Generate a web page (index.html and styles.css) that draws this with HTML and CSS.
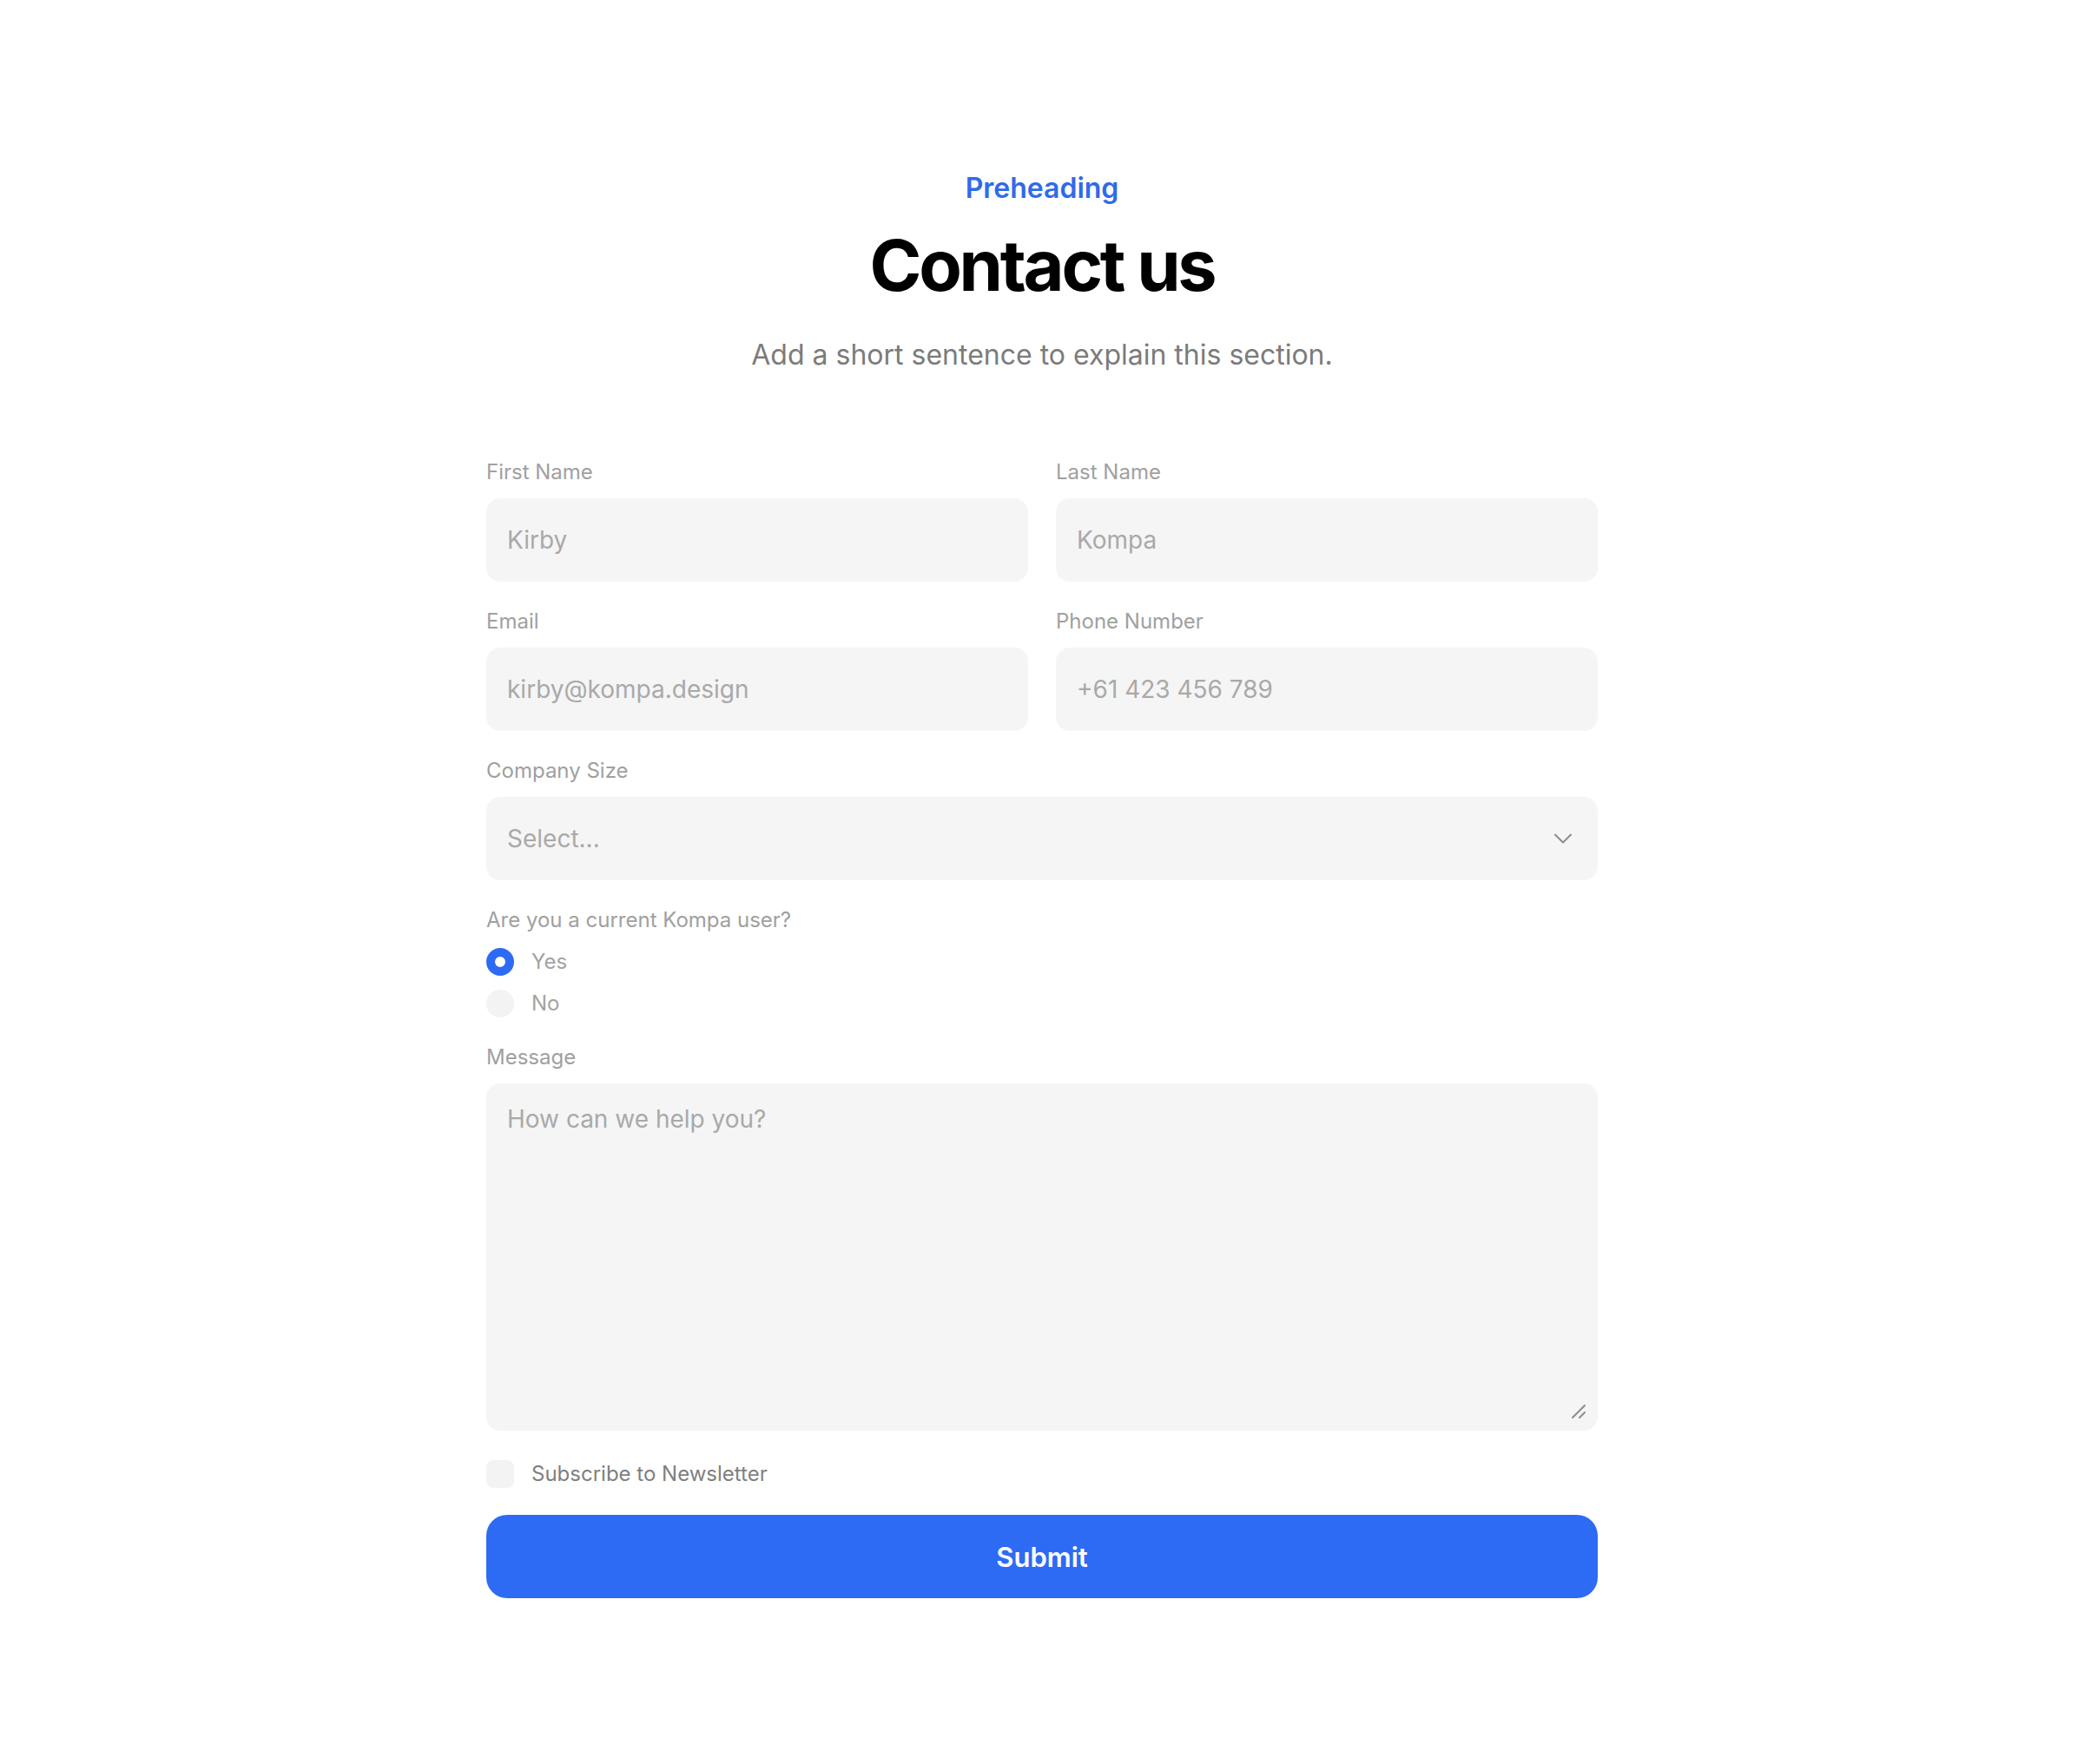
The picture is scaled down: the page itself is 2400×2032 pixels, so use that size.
FILE: index.html
```html
<!DOCTYPE html>
<html lang="en">
<head>
  <meta charset="UTF-8" />
  <title>Contact us</title>
  <link rel="stylesheet" href="styles.css">
</head>
<body>

<section class="contact">
  <header class="contact-head">
    <p class="preheading">Preheading</p>
    <h1 class="title">Contact us</h1>
    <p class="lead">Add a short sentence to explain this section.</p>
  </header>

  <form class="contact-form">
    <!-- Name -->
    <div class="row">
      <div class="field">
        <label for="firstName">First Name</label>
        <input type="text" id="firstName" placeholder="Kirby" />
      </div>
      <div class="field">
        <label for="lastName">Last Name</label>
        <input type="text" id="lastName" placeholder="Kompa" />
      </div>
    </div>

    <!-- Contact details -->
    <div class="row">
      <div class="field">
        <label for="email">Email</label>
        <input type="email" id="email" placeholder="kirby@kompa.design" />
      </div>
      <div class="field">
        <label for="phone">Phone Number</label>
        <input type="tel" id="phone" placeholder="+61 423 456 789" />
      </div>
    </div>

    <div class="field">
      <label for="size">Company Size</label>
      <div class="select-wrap">
        <select id="size">
          <option value="">Select...</option>
          <option>1-10</option>
          <option>11-50</option>
          <option>51-200</option>
          <option>200+</option>
        </select>
        <svg class="chevron" width="24" height="24" viewBox="0 0 24 24" fill="none">
          <path d="M3 7.5l9 9 9-9" stroke="#8c8c8c" stroke-width="2" stroke-linecap="round" stroke-linejoin="round"/>
        </svg>
      </div>
    </div>

    <div class="field">
      <span class="label">Are you a current Kompa user?</span>
      <div class="radios">
        <label class="choice"><input type="radio" name="user" checked /> Yes</label>
        <label class="choice"><input type="radio" name="user" /> No</label>
      </div>
    </div>

    <div class="field">
      <label for="message">Message</label>
      <div class="textarea-wrap">
        <textarea id="message" placeholder="How can we help you?"></textarea>
        <svg class="grip" width="20" height="20" viewBox="0 0 20 20" fill="none">
          <path d="M3 17L17 3M11 17l6-6" stroke="#8c8c8c" stroke-width="2" stroke-linecap="round"/>
        </svg>
      </div>
    </div>

    <label class="choice check-row"><input type="checkbox" /> Subscribe to Newsletter</label>

    <button type="submit" class="btn">Submit</button>
  </form>
</section>

</body>
</html>
```

FILE: styles.css
```css
body {
  margin: 0;
  font-family: 'Inter', 'Noto Sans', sans-serif;
  background: #ffffff;
  color: #111;
}

.contact {
  width: 1280px;
  margin: 0 auto;
  padding-top: 197px;
}

.contact-head {
  display: flex;
  flex-direction: column;
  align-items: center;
  text-align: center;
}

.preheading {
  margin: 0;
  font-size: 32px;
  line-height: 40px;
  font-weight: 600;
  color: #2f6aeb;
}

.title {
  margin: 25px 0 0;
  font-size: 81px;
  line-height: 88px;
  font-weight: 700;
  letter-spacing: -0.04em;
  color: #000;
}

.lead {
  margin: 37px 0 0;
  font-size: 32px;
  line-height: 44px;
  color: #7b7b7b;
}

.contact-form {
  margin-top: 95px;
  display: flex;
  flex-direction: column;
  gap: 28px;
}

.row {
  display: grid;
  grid-template-columns: 1fr 1fr;
  gap: 32px;
}

.field {
  display: flex;
  flex-direction: column;
  gap: 12px;
}

.field > label,
.label {
  font-size: 24px;
  line-height: 36px;
  color: #a0a0a0;
}

input[type="text"],
input[type="email"],
input[type="tel"],
select,
textarea {
  box-sizing: border-box;
  width: 100%;
  margin: 0;
  border: none;
  outline: none;
  border-radius: 16px;
  background: #f5f5f5;
  font-family: inherit;
  font-size: 28px;
  color: #a9a9a9;
  -webkit-appearance: none;
  appearance: none;
}

input[type="text"],
input[type="email"],
input[type="tel"],
select {
  height: 96px;
  padding: 0 24px;
}

::placeholder {
  color: #a9a9a9;
  opacity: 1;
}

.select-wrap,
.textarea-wrap {
  position: relative;
}

.chevron {
  position: absolute;
  right: 28px;
  top: 50%;
  margin-top: -12px;
  pointer-events: none;
}

textarea {
  display: block;
  height: 400px;
  padding: 20px 24px;
  line-height: 1.5;
  resize: none;
}

.grip {
  position: absolute;
  right: 12px;
  bottom: 12px;
  pointer-events: none;
}

.radios {
  display: flex;
  flex-direction: column;
  gap: 16px;
  margin-top: 2px;
}

.choice {
  display: flex;
  align-items: center;
  gap: 20px;
  font-size: 24px;
  line-height: 36px;
  color: #a3a3a3;
}

.radios .choice {
  line-height: 32px;
}

.choice input {
  -webkit-appearance: none;
  appearance: none;
  width: 32px;
  height: 32px;
  margin: 0;
  background: #f3f3f3;
  flex-shrink: 0;
}

.choice input[type="radio"] {
  border-radius: 50%;
}

.choice input[type="radio"]:checked {
  background: #fff;
  border: 10px solid #2e6bf5;
}

.choice input[type="checkbox"] {
  border-radius: 8px;
}

.check-row {
  margin: 4px 0 1px;
  color: #7f7f7f;
}

.btn {
  height: 96px;
  border: none;
  border-radius: 24px;
  background: #2e6bf5;
  color: #fff;
  font-family: inherit;
  font-size: 31px;
  font-weight: 600;
  cursor: pointer;
}
```
